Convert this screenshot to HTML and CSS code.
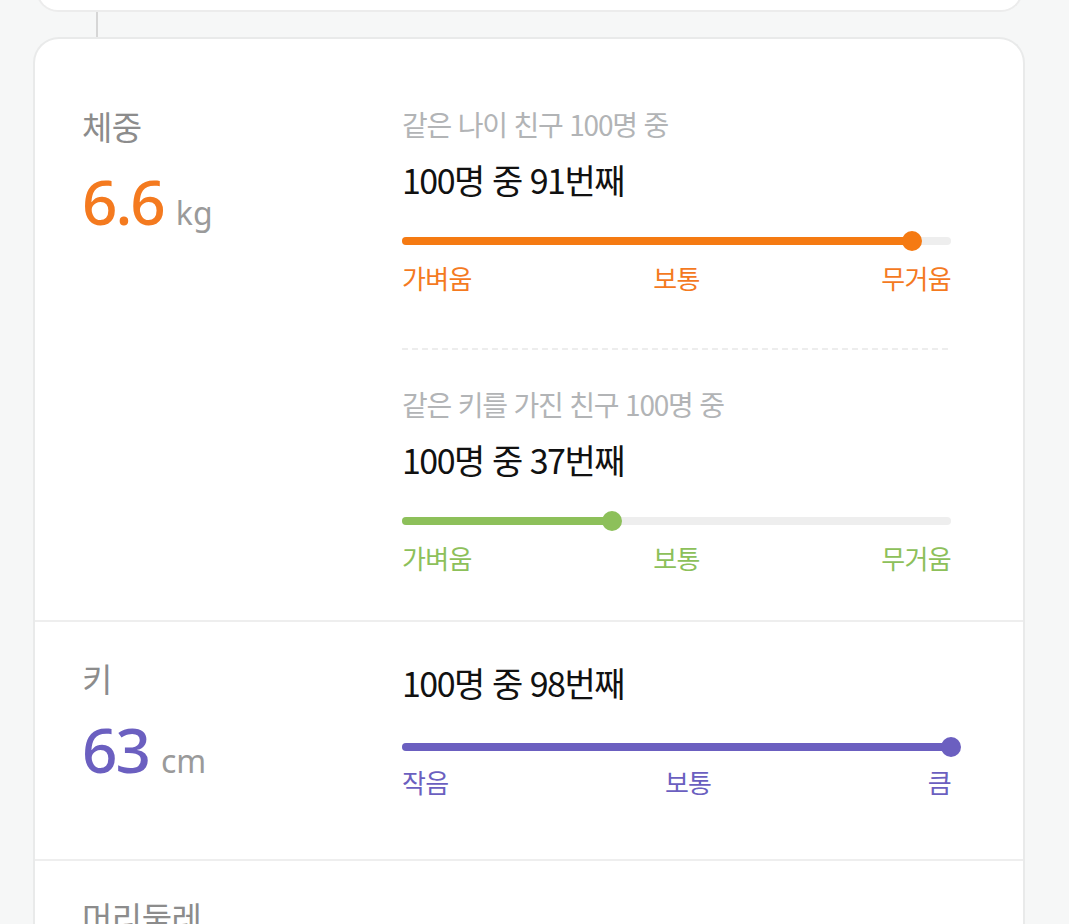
FILE: index.html
```html
<!DOCTYPE html>
<html lang="ko">
<head>
<meta charset="utf-8">
<link rel="stylesheet" href="styles.css">
</head>
<body>
<div class="page">
  <div class="prev-card"></div>
  <div class="connector"></div>
  <div class="card">
    <section class="row">
      <div class="left">
        <div class="label">체중</div>
        <div class="value"><span class="num orange">6.6</span><span class="unit">kg</span></div>
      </div>
      <div class="right">
        <div class="block">
          <div class="sub">같은 나이 친구 100명 중</div>
          <div class="main">100명 중 91번째</div>
          <div class="bar orange-bar"><div class="fill" style="width:92.9%"></div></div>
          <div class="scale orange"><span>가벼움</span><span>보통</span><span>무거움</span></div>
        </div>
        <div class="dash"></div>
        <div class="block">
          <div class="sub">같은 키를 가진 친구 100명 중</div>
          <div class="main">100명 중 37번째</div>
          <div class="bar green-bar"><div class="fill" style="width:38.2%"></div></div>
          <div class="scale green"><span>가벼움</span><span>보통</span><span>무거움</span></div>
        </div>
      </div>
    </section>
    <section class="row row-height">
      <div class="left">
        <div class="label">키</div>
        <div class="value"><span class="num purple">63</span><span class="unit">cm</span></div>
      </div>
      <div class="right">
        <div class="block">
          <div class="main">100명 중 98번째</div>
          <div class="bar purple-bar"><div class="fill" style="width:100%"></div></div>
          <div class="scale purple"><span>작음</span><span>보통</span><span>큼</span></div>
        </div>
      </div>
    </section>
    <section class="row row-head">
      <div class="left">
        <div class="label">머리둘레</div>
      </div>
    </section>
  </div>
</div>
</body>
</html>
```

FILE: styles.css
```css
* { box-sizing: border-box; }
html, body { margin: 0; padding: 0; }
body {
  background: #f6f7f7;
  font-family: "Noto Sans CJK KR", "Noto Sans", sans-serif;
  width: 1069px;
  height: 924px;
  overflow: hidden;
}
.page {
  display: flex;
  flex-direction: column;
}
.prev-card {
  margin: -30px 46px 0 36px;
  height: 42px;
  background: #fff;
  border: 2px solid #ececec;
  border-top: none;
  border-radius: 0 0 22px 22px;
}
.connector {
  margin-left: 96px;
  width: 2px;
  height: 25px;
  background: #d6d6d6;
}
.card {
  margin: 0 44px 0 33px;
  background: #fff;
  border: 2px solid #e9eaea;
  border-bottom: none;
  border-radius: 26px 26px 0 0;
}
.row {
  display: grid;
  grid-template-columns: 320px 1fr;
  padding: 67px 72px 45px 47px;
  border-bottom: 2px solid #eeeeee;
}
.row-height { padding-top: 40px; padding-bottom: 60px; }
.row-head { padding-top: 36px; border-bottom: none; height: 100px; }

.left { display: flex; flex-direction: column; }
.label {
  font-size: 33px;
  line-height: 40px;
  color: #8c8c8c;
  margin-top: 0;
  letter-spacing: -0.5px;
}
.value {
  display: flex;
  align-items: baseline;
  margin-top: 20px;
}
.num {
  font-family: "Noto Sans", sans-serif;
  font-size: 62px;
  line-height: 70px;
  font-weight: 500;
  letter-spacing: -2px;
}
.unit {
  font-family: "Noto Sans", sans-serif;
  font-size: 32px;
  color: #9a9a9a;
  margin-left: 12px;
}
.row-height .label { margin-top: -4px; }
.row-height .value { margin-top: 16px; }

.orange { color: #f47a1f; }
.green { color: #8dc05a; }
.purple { color: #6b5fc0; }

.right { display: flex; flex-direction: column; }
.block { display: flex; flex-direction: column; }
.sub {
  font-size: 28px;
  line-height: 36px;
  color: #b2b4b6;
  letter-spacing: -1.2px;
  margin-bottom: 17px;
}
.main {
  font-size: 34px;
  line-height: 42px;
  color: #111;
  letter-spacing: -1.5px;
}
.bar {
  position: relative;
  margin-top: 36px;
  height: 8px;
  border-radius: 4px;
  background: #eeeeee;
}
.fill {
  position: relative;
  height: 100%;
  border-radius: 4px;
}
.fill::after {
  content: "";
  position: absolute;
  right: -10px;
  top: -6px;
  width: 20px;
  height: 20px;
  border-radius: 50%;
  background: inherit;
}
.orange-bar .fill { background: #f57a12; }
.green-bar .fill { background: #8dc05a; }
.purple-bar .fill { background: #6b5fc0; }
.scale {
  display: flex;
  justify-content: space-between;
  margin-top: 16px;
  font-size: 26px;
  line-height: 34px;
  letter-spacing: -0.7px;
}
.dash {
  margin-top: 53px;
  margin-right: 3px;
  border-top: 2px dashed #ededed;
  margin-bottom: 36px;
}
.row-height .bar { margin-top: 39px; }
.row-height .scale { margin-top: 14px; }
```
